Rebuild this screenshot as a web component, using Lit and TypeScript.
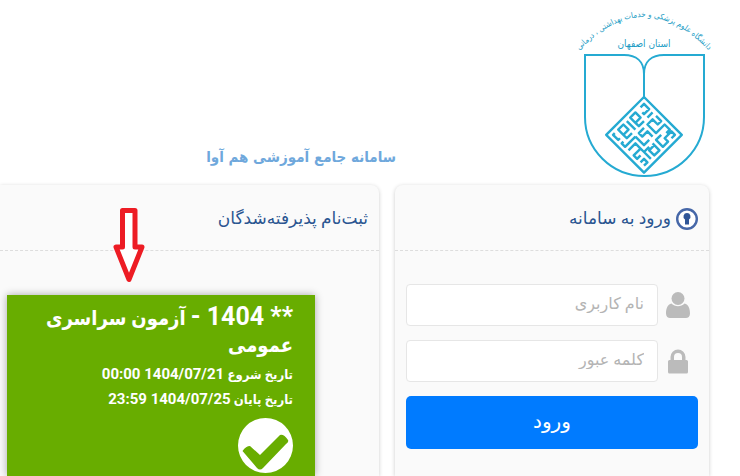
import { LitElement, html, css } from "lit";
import { customElement } from "lit/decorators.js";

@customElement("university-logo")
class UniversityLogo extends LitElement {
  static styles = css`
    :host { display: block; }
    svg { display: block; width: 130px; overflow: visible; }
    .line { fill: none; stroke: #25aad2; stroke-width: 2; }
    .kufic { fill: none; stroke: #25aad2; stroke-width: 1; stroke-linejoin: round; }
    .words { fill: #1c9cc4; font-family: "DejaVu Sans Condensed", "DejaVu Sans", sans-serif; font-size: 8px; text-anchor: middle; direction: rtl; }
    .place { font-size: 10px; }
  `;

  render() {
    return html`<svg viewBox="9 0 130 182" role="img" aria-label="نشان دانشگاه">
      <path id="arc" fill="none" d="M4 56 Q74 -22 144 56" />
      <text class="words"><textPath href="#arc" startOffset="50%">دانشگاه علوم پزشکی و خدمات بهداشتی ، درمانی</textPath></text>
      <text class="words place" x="74" y="47">استان اصفهان</text>
      <path class="line" d="M74 97V74C74 61 66 55 54 55H15V117A59.500 59 0 0 0 134 117V55H94C82 55 74 61 74 74" />
      <g transform="translate(74 97) rotate(45) scale(2.430)">
        <path class="kufic" d="M0 0H22V22H0Z
          M2 4V2H5V5H4 M7 2V5
          M2 7H5V10H2Z M5 10H7V7
          M2 12H7 M2 14H5V17H2Z M5 17H7V14
          M2 19V20H5V19 M7 19V20H9V17
          M9 2H12V4H9V7H14V2H17V4
          M9 9V12H11V9H14 M16 6V9H20V6H18V2H20V4
          M16 11H20V14H17V11 M20 16H16V13
          M9 14H14V11 M9 20V14 M11 20V16H14V20H16V18
          M18 20V18H20V20 M16 16H14" />
      </g>
    </svg>`;
  }
}

@customElement("app-root")
class AppRoot extends LitElement {
  static styles = css`
    :host {
      display: flex; flex-direction: column; min-height: 100vh; overflow: hidden;
      direction: rtl; background: #fff; font-family: Roboto, "DejaVu Sans", sans-serif;
    }
    * { box-sizing: border-box; }
    .top { display: flex; align-items: flex-end; padding-right: 31px; min-height: 185px; }
    .brand { flex: 313; padding-bottom: 3px; }
    .site { flex: 396; margin: 0; padding-bottom: 16px; font: 700 15px/24px "DejaVu Sans Condensed", sans-serif; color: #6fa8dc; }
    .cols { flex: 1; display: grid; grid-template-columns: 314fr 379fr; gap: 16px; padding-right: 31px; }
    .card { display: flex; flex-direction: column; background: #fafafa; border-radius: 8px 8px 0 0; box-shadow: 0 1px 4px #0003; }
    .card.wide { border-radius: 0 8px 0 0; }
    .head {
      display: flex; align-items: center; gap: 5px; height: 66px; margin: 0; padding: 0 11px;
      border-bottom: 1px dashed #ddd; font-size: 17px; font-weight: 400; color: #2a5591;
    }
    .key { margin-top: 2px; }
    form { padding: 33px 11px 0; display: grid; gap: 14px; }
    .row { display: flex; align-items: center; gap: 8px; padding-right: 8px; }
    label { flex: none; width: 24px; display: flex; justify-content: center; }
    label svg { fill: #bbb; display: block; }
    input {
      flex: 1; min-width: 0; height: 42px; border: 1px solid #e6e6e6; border-radius: 4px; background: #fff;
      padding: 0 13px 4px; font: 16px Roboto, "DejaVu Sans", sans-serif;
    }
    input::placeholder { color: #b4b4b4; }
    button { height: 53px; padding: 0 0 4px; border: 0; border-radius: 5px; background: #007bff; color: #fff; font: 20px Roboto, "DejaVu Sans", sans-serif; }
    .body { flex: 1; display: flex; flex-direction: column; padding: 44px 0 0 7px; position: relative; }
    .exam {
      flex: 1; width: 308px; margin-right: auto; background: #68ad00; box-shadow: 0 0 8px #0005; color: #fff;
      padding: 8px 22px 0; font-family: Roboto, "DejaVu Sans Condensed", sans-serif;
    }
    .exam h3 { margin: 0 0 3px; font-size: 20px; line-height: 27px; font-weight: 700; }
    .exam h3 b { font-size: 25px; line-height: 27px; font-weight: 700; }
    .exam p { margin: 0; font-size: 13px; line-height: 24px; font-weight: 700; }
    .exam p time { font-size: 15px; line-height: 24px; }
    .tick { display: block; margin-top: 6px; }
    .arrow { position: absolute; left: 112px; top: -45px; }
  `;

  render() {
    return html`
      <header class="top">
        <university-logo class="brand"></university-logo>
        <h1 class="site">سامانه جامع آموزشی هم آوا</h1>
      </header>
      <main class="cols">
        <section class="card">
          <h2 class="head">
            <svg class="key" width="22" height="22" viewBox="0 0 22 22" aria-hidden="true">
              <circle cx="11" cy="11" r="9.800" fill="#fff" stroke="#4667a8" stroke-width="2.400" />
              <path fill="#2f5597" d="M11 5a3.500 3.500 0 0 0-2 6.400v5h4v-5a3.500 3.500 0 0 0-2-6.400z" />
            </svg>
            ورود به سامانه
          </h2>
          <form>
            <div class="row">
              <label for="user" aria-label="نام کاربری">
                <svg width="24" height="26" viewBox="0 0 24 26">
                  <circle cx="12" cy="6.500" r="6.500" />
                  <path d="M5.500 11.500C9 15 15 15 18.500 11.500C22.500 12 24 17 24 21.500C24 24.500 22 26 20 26H4C2 26 0 24.500 0 21.500C0 17 1.500 12 5.500 11.500Z" />
                </svg>
              </label>
              <input id="user" type="text" placeholder="نام کاربری" />
            </div>
            <div class="row">
              <label for="pass" aria-label="کلمه عبور">
                <svg width="20" height="25" viewBox="0 0 20 25">
                  <path fill-rule="evenodd" d="M2.500 11V8a7.500 7.500 0 0 1 15 0v3h1a1.500 1.500 0 0 1 1.500 1.500v10.500a1.500 1.500 0 0 1-1.500 1.500h-17A1.500 1.500 0 0 1 0 23V12.500A1.500 1.500 0 0 1 1.500 11zM6 11h8V8a4 4 0 0 0-8 0z" />
                </svg>
              </label>
              <input id="pass" type="password" placeholder="کلمه عبور" />
            </div>
            <button type="button">ورود</button>
          </form>
        </section>
        <section class="card wide">
          <h2 class="head">ثبت‌نام پذیرفته‌شدگان</h2>
          <div class="body">
            <svg class="arrow" width="34" height="78" viewBox="0 0 34 78" aria-hidden="true">
              <path fill="#fff" stroke="#ed1c24" stroke-width="5" stroke-linejoin="round" d="M10.500 4.500H23V41H30L17 73.500L4 41H10.500Z" />
            </svg>
            <article class="exam">
              <h3><b>** 1404 -</b> آزمون سراسری عمومی</h3>
              <p>تاریخ شروع <time>1404/07/21 00:00</time></p>
              <p>تاریخ پایان <time>1404/07/25 23:59</time></p>
              <svg class="tick" width="55" height="55" viewBox="0 0 55 55" role="img" aria-label="فعال">
                <circle cx="27.500" cy="27.500" r="27.500" fill="#fff" />
                <path d="M4.500 33Q8 28 12 28L22 37L42 17Q46 16 50 22Q51 24 48 26L25 50Q22 53 19 50Z" fill="#68ad00" />
              </svg>
            </article>
          </div>
        </section>
      </main>`;
  }
}
